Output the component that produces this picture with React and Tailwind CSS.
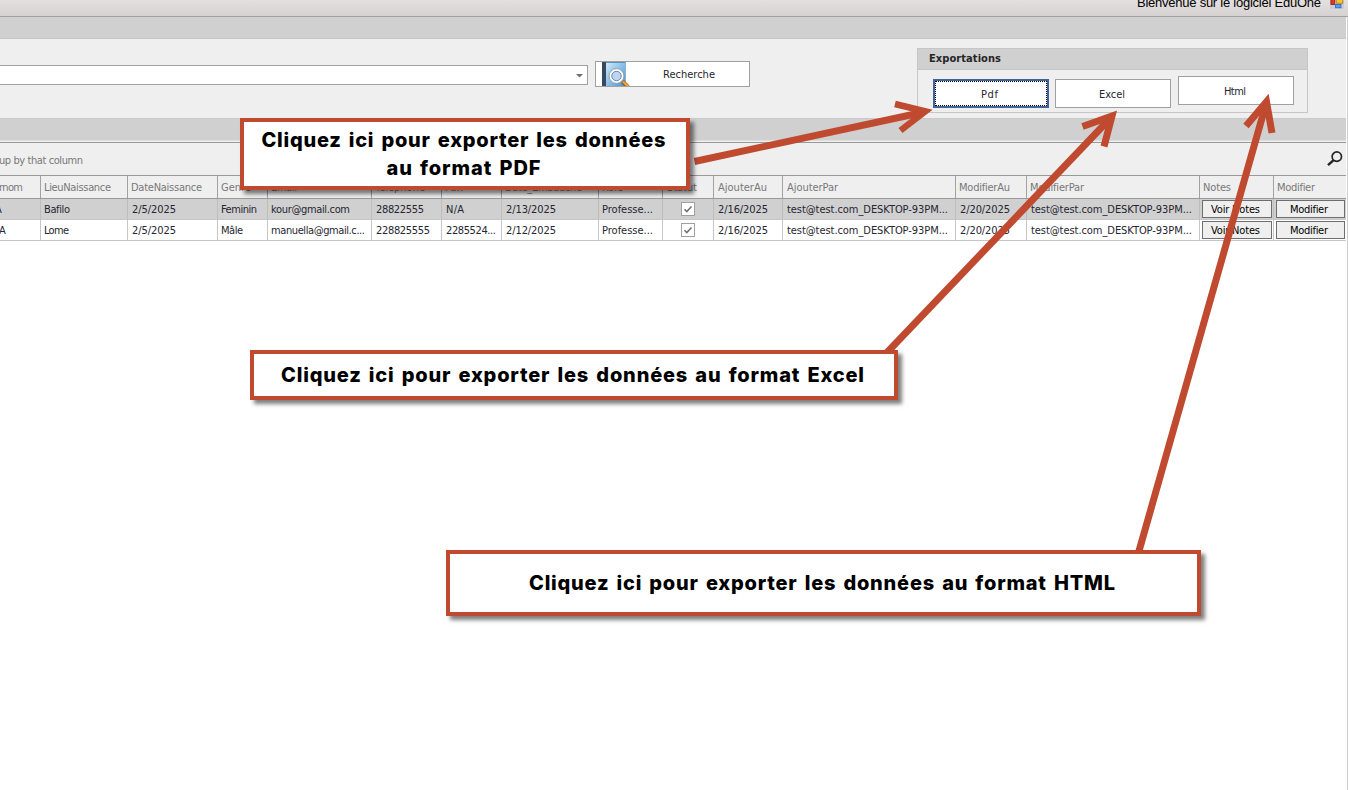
import { useLayoutEffect, useRef } from "react";

function Fit({ w, className = "", children }) {
  const ref = useRef(null);
  useLayoutEffect(() => {
    const el = ref.current;
    el.style.letterSpacing = "0px";
    const natural = el.getBoundingClientRect().width;
    const step = (w - natural) / Math.max(1, el.textContent.length - 1);
    el.style.letterSpacing = `${step}px`;
    el.style.marginRight = `${-step}px`;
  }, [w, children]);
  return (
    <span ref={ref} className={`inline-block whitespace-pre ${className}`}>
      {children}
    </span>
  );
}

const COLS = [
  { h: "rnom", hw: 24, cls: "w-[41px]" },
  { h: "LieuNaissance", hw: 67, cls: "w-[87px]" },
  { h: "DateNaissance", hw: 71, cls: "w-[90px]" },
  { h: "Genre", hw: 30, cls: "w-[50px]" },
  { h: "Email", hw: 26, cls: "w-[104px]" },
  { h: "Telephone", hw: 50, cls: "w-[70px]" },
  { h: "Fax", hw: 18, cls: "w-[60px]" },
  { h: "Date_Embauche", hw: 77, cls: "w-[97px]" },
  { h: "Role", hw: 21, cls: "w-[64px]" },
  { h: "Statut", hw: 30, cls: "w-[51px]" },
  { h: "AjouterAu", hw: 49, cls: "w-[69px]" },
  { h: "AjouterPar", hw: 51, cls: "w-[173px]" },
  { h: "ModifierAu", hw: 51, cls: "w-[71px]" },
  { h: "ModifierPar", hw: 54, cls: "w-[173px]" },
  { h: "Notes", hw: 28, cls: "w-[74px]" },
  { h: "Modifier", hw: 38, cls: "w-[72px]" },
];

const MAIL = ["test@test.com_DESKTOP-93PM...", 161];
const ROWS = [
  [["A", 6], ["Bafilo", 26], ["2/5/2025", 44], ["Feminin", 36], ["kour@gmail.com", 79], ["28822555", 48], ["N/A", 18], ["2/13/2025", 50], ["Professe...", 51], "check", ["2/16/2025", 50], MAIL, ["2/20/2025", 50], MAIL, ["Voir Notes", 49, "btn"], ["Modifier", 38, "btn"]],
  [["A", 6], ["Lome", 25], ["2/5/2025", 44], ["Mâle", 22], ["manuella@gmail.c...", 94], ["228825555", 54], ["2285524...", 50], ["2/12/2025", 50], ["Professe...", 51], "check", ["2/16/2025", 50], MAIL, ["2/20/2025", 50], MAIL, ["Voir Notes", 49, "btn"], ["Modifier", 38, "btn"]],
];

const WIDE_INSET = [2, 5, 6, 7, 10, 11, 12, 13];

function Check() {
  return (
    <div className="flex w-full items-center justify-center">
      <svg width="14" height="14" viewBox="0 0 14 14">
        <rect x="0.5" y="0.5" width="13" height="13" fill="#fff" stroke="#a0a0a0" />
        <path d="M3.5 7.2 5.8 9.6 10.5 4.6" fill="none" stroke="#707070" strokeWidth="1.5" />
      </svg>
    </div>
  );
}

function Cell({ cell, i, row }) {
  if (cell === "check") return <Check />;
  if (cell[2] === "btn")
    return (
      <div className="flex h-full w-full py-px pl-[2px] pr-px">
        <div className="flex w-full items-center justify-center border border-[#6e6e6e] bg-[#efefef] pr-[3px] pt-px text-black">
          <Fit w={cell[1]}>{cell[0]}</Fit>
        </div>
      </div>
    );
  const first = row === 0 ? "-ml-[5px]" : "-ml-px";
  const pad = i === 0 ? first : WIDE_INSET.includes(i) ? "ml-[4px]" : "ml-[3px]";
  return (
    <Fit w={cell[1]} className={`pt-px ${pad}`}>
      {cell[0]}
    </Fit>
  );
}

function Grid() {
  return (
    <div className="w-[1346px]">
      <div className="flex h-[24px] border-y border-[#999999] bg-[#efefef] text-[#787878]">
        {COLS.map((c, i) => (
          <div key={c.h} className={`flex shrink-0 items-center overflow-hidden last:border-r-0 border-r border-[#a2a2a2] ${c.cls}`}>
            <Fit w={c.hw} className={`pt-px ${i === 0 ? "-ml-px" : i >= 9 && i <= 11 ? "ml-[4px]" : "ml-[3px]"}`}>
              {c.h}
            </Fit>
          </div>
        ))}
      </div>
      {ROWS.map((r, ri) => (
        <div key={ri} className={`flex h-[21px] border-b border-[#c6c6c6] text-[#262630] ${ri === 0 ? "bg-[#d0d0d0]" : "bg-white"}`}>
          {r.map((cell, i) => (
            <div key={i} className={`flex shrink-0 items-center overflow-hidden last:border-r-0 border-r ${ri === 0 ? "border-[#bdbdbd]" : "border-[#c6c6c6]"} ${COLS[i].cls}`}>
              <Cell cell={cell} i={i} row={ri} />
            </div>
          ))}
        </div>
      ))}
    </div>
  );
}

function BookIcon() {
  return (
    <svg width="29" height="26" viewBox="0 0 29 26" className="shrink-0">
      <defs>
        <linearGradient id="cover" x1="0" y1="0" x2="1" y2="1">
          <stop offset="0" stopColor="#d3ecf8" />
          <stop offset="0.45" stopColor="#8fc3e8" />
          <stop offset="1" stopColor="#4a90cc" />
        </linearGradient>
      </defs>
      <rect x="1" y="0" width="5" height="26" fill="#3a4763" />
      <rect x="5" y="1" width="20" height="25" fill="url(#cover)" />
      <path d="M5 1.5H25" stroke="#5b93bd" />
      <path d="M24.5 0V26" stroke="#8fb4d0" />
      <path d="M21.5 20.5 27 26" stroke="#9a5a20" strokeWidth="4" />
      <path d="M22 20.5 27.5 26" stroke="#f2a33a" strokeWidth="2.2" />
      <circle cx="15.5" cy="15" r="6.3" fill="#c5daf3" stroke="#fff" strokeWidth="2.6" />
      <circle cx="15.5" cy="15" r="7.4" fill="none" stroke="#7289a6" strokeWidth="0.8" />
      <circle cx="15.5" cy="15" r="4.7" fill="#bcd5f2" stroke="#6c86ab" strokeWidth="1" />
    </svg>
  );
}

function Callout({ className, children }) {
  return (
    <div className={`absolute flex flex-col items-center justify-center border-4 border-[#bf4a30] bg-white pr-[3px] font-['Inter',sans-serif] text-[20px] font-extrabold leading-[28px] text-black shadow-[4px_4px_4px_rgba(0,0,0,0.5)] [word-spacing:2px] ${className}`}>
      {children}
    </div>
  );
}

function Arrows() {
  return (
    <svg className="absolute left-0 top-0" width="1348" height="790" viewBox="0 0 1348 790" fill="none" stroke="#bf4a30" strokeWidth="7">
      <path d="M694.5 161.5 922 112.5" />
      <path d="M895 104 925.3 111.4 900.5 130.5" strokeWidth="6.5" />
      <path d="M887 352.5 1111 117.5" />
      <path d="M1082.5 126.5 1112 116 1104 146.5" strokeWidth="7" />
      <path d="M1139 551 1266 104" />
      <path d="M1246 126 1266.5 101.8 1272 133" strokeWidth="7" />
    </svg>
  );
}

export default function App() {
  return (
    <div className="relative h-[790px] w-[1348px] overflow-hidden bg-white font-['DejaVu_Sans_Condensed','DejaVu_Sans',sans-serif] text-[11px] leading-[14px]">
      <div className="flex h-[17px] items-start justify-end border-b border-[#a3a1a1] bg-linear-to-b from-[#e4e0e0] to-[#d6d2d2]">
        <Fit w={184} className="-mt-[5px] font-['Liberation_Sans',sans-serif] text-[13px] leading-[15px] text-black">
          Bienvenue sur le logiciel EduOne
        </Fit>
        <svg width="14" height="9" viewBox="0 0 14 9" className="ml-[9px] mr-[4px]">
          <rect x="0" y="0" width="14" height="9" fill="#c9cdd6" />
          <rect x="0.9" y="-1" width="3.8" height="5.4" fill="#d93a2c" stroke="#8e1a12" strokeWidth="0.8" />
          <rect x="6.2" y="-1" width="6.6" height="4.2" fill="#f7c62c" stroke="#a9780c" strokeWidth="0.8" />
          <rect x="5.6" y="4.4" width="5.4" height="3.4" fill="#5a9cf5" stroke="#2a5fc0" strokeWidth="0.8" />
        </svg>
      </div>

      <div className="border-r border-[#cfcfcf] pr-px">
        <div className="h-[22px] border-b border-[#c6c6c6] bg-[#d0d0d0]" />
        <div className="flex h-[79px] items-start bg-[#efefef]">
          <div className="mt-[26px] flex h-[20px] w-[588px] items-center justify-end border border-l-0 border-[#a0a0a0] bg-white pr-[4px] pt-px">
            <svg width="7" height="4" viewBox="0 0 7 4">
              <path d="M0 0H7L3.5 3.6Z" fill="#707070" />
            </svg>
          </div>
          <div className="ml-[7px] mt-[22px] flex h-[26px] w-[155px] items-center overflow-hidden border border-[#a0a0a0] bg-white pl-[5px] text-[#262630]">
            <BookIcon />
            <Fit w={52} className="ml-[33px] pt-[2px]">Recherche</Fit>
          </div>
          <div className="ml-[167px] mt-[9px] h-[65px] w-[391px] border border-[#c6c6c6]">
            <div className="flex h-[21px] items-center border-b border-[#c6c6c6] bg-[#d0d0d0] pl-[11px] font-bold text-[#262626]">
              <Fit w={72}>Exportations</Fit>
            </div>
            <div className="flex pl-[15px] text-[#262630]">
              <div className="mt-[9px] h-[29px] w-[116px] border-2 border-[#41659b] bg-white">
                <div className="flex h-full items-center justify-center border border-dotted border-black pr-[3px] pt-[2px]">
                  <Fit w={17}>Pdf</Fit>
                </div>
              </div>
              <div className="ml-[6px] mt-[9px] flex h-[29px] w-[116px] items-center justify-center border border-[#a0a0a0] bg-white pr-[2px] pt-[2px]">
                <Fit w={26}>Excel</Fit>
              </div>
              <div className="ml-[7px] mt-[6px] flex h-[29px] w-[116px] items-center justify-center border border-[#a0a0a0] bg-white pr-[2px] pt-[2px]">
                <Fit w={22}>Html</Fit>
              </div>
            </div>
          </div>
        </div>
        <div className="h-[23px] border-y border-t-[#cacaca] border-b-[#dedede] bg-[#d0d0d0]" />
        <div className="h-px bg-[#efefef]" />
        <div className="flex h-[33px] items-center justify-between border-t border-[#999999] bg-[#efefef] text-[#787878]">
          <Fit w={84} className="-ml-px pt-[3px]">up by that column</Fit>
          <svg width="16" height="16" viewBox="0 0 16 16" className="mr-[3px]" fill="none" stroke="#262626">
            <circle cx="9.8" cy="5.6" r="4.7" strokeWidth="1.7" />
            <path d="M6.6 9.1 1 14.2" strokeWidth="2.4" />
          </svg>
        </div>
        <Grid />
        <div className="h-[549px] bg-white" />
      </div>

      <Arrows />
      <Callout className="left-[240px] top-[118px] h-[72px] w-[450px]">
        <Fit w={404}>Cliquez ici pour exporter les données</Fit>
        <Fit w={154}>au format PDF</Fit>
      </Callout>
      <Callout className="left-[250px] top-[350px] h-[50px] w-[648px]">
        <Fit w={583}>Cliquez ici pour exporter les données au format Excel</Fit>
      </Callout>
      <Callout className="left-[446px] top-[550px] h-[66px] w-[755px]">
        <Fit w={586}>Cliquez ici pour exporter les données au format HTML</Fit>
      </Callout>
    </div>
  );
}
